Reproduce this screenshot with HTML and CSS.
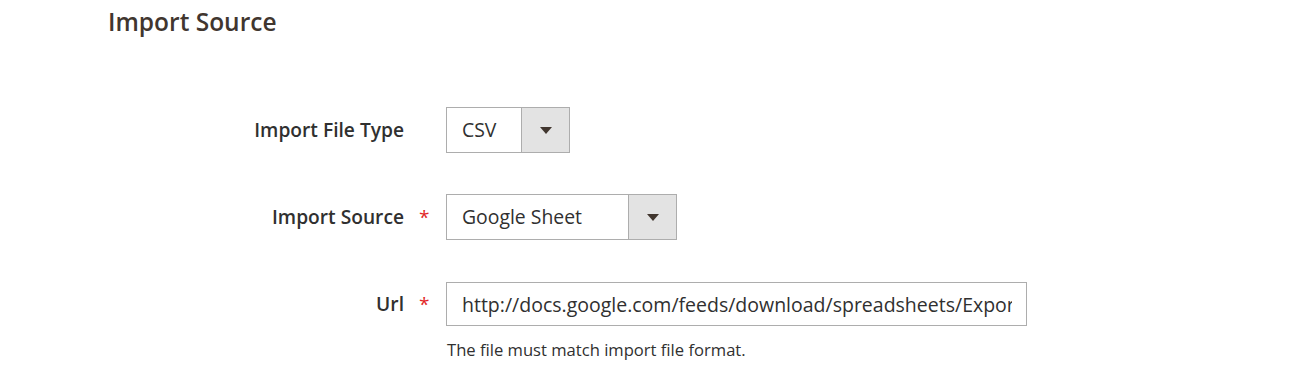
FILE: index.html
```html
<!DOCTYPE html>
<html lang="en">
<head>
    <meta charset="UTF-8">
    <meta name="viewport" content="width=device-width, initial-scale=1.0">
    <title>Import Source</title>
    <link rel="stylesheet" href="styles.css">
</head>
<body>
    <main class="page">
        <h1 class="title">Import Source</h1>
        <div class="form">
            <div class="field">
                <label class="label">Import File Type</label>
                <span class="mark"></span>
                <div class="control">
                    <div class="select select-csv">
                        <span class="select-value">CSV</span>
                        <span class="select-btn"><span class="arrow"></span></span>
                    </div>
                </div>
            </div>
            <div class="field">
                <label class="label">Import Source</label>
                <span class="mark">*</span>
                <div class="control">
                    <div class="select select-source">
                        <span class="select-value">Google Sheet</span>
                        <span class="select-btn"><span class="arrow"></span></span>
                    </div>
                </div>
            </div>
            <div class="field field-url">
                <label class="label">Url</label>
                <span class="mark">*</span>
                <div class="control">
                    <input class="input" type="text" value="http://docs.google.com/feeds/download/spreadsheets/Export?key=1&amp;exportFormat=csv">
                    <div class="note">The file must match import file format.</div>
                </div>
            </div>
        </div>
    </main>
</body>
</html>
```

FILE: styles.css
```css
body {
    margin: 0;
    background-color: #ffffff;
    font-family: "Open Sans", "Liberation Sans", sans-serif;
    color: #303030;
}

.page {
    padding-top: 6px;
}

.title {
    margin: 0 0 0 108px;
    font-size: 24.5px;
    font-weight: 600;
    line-height: 32px;
    color: #41362f;
}

.form {
    margin-top: 69px;
    display: flex;
    flex-direction: column;
    gap: 41px;
}

.field {
    display: flex;
    align-items: flex-start;
}

.field-url {
    margin-top: 1px;
}

.label {
    width: 404px;
    text-align: right;
    font-size: 19.2px;
    font-weight: 600;
    line-height: 46px;
    color: #303030;
}

.mark {
    width: 42px;
    box-sizing: border-box;
    padding-left: 15px;
    font-size: 19px;
    line-height: 46px;
    color: #e22626;
}

.field-url .label,
.field-url .mark {
    line-height: 44px;
}

.select {
    display: flex;
    height: 46px;
    box-sizing: border-box;
    border: 1px solid #adadad;
    background-color: #ffffff;
    font-size: 19.4px;
    line-height: 44px;
}

.select-csv {
    width: 124px;
}

.select-source {
    width: 231px;
}

.select-value {
    flex-grow: 1;
    padding-left: 15px;
}

.select-btn {
    width: 47px;
    border-left: 1px solid #adadad;
    background-color: #e3e3e3;
    display: flex;
    align-items: center;
    justify-content: center;
}

.arrow {
    width: 0;
    height: 0;
    border-left: 6px solid transparent;
    border-right: 6px solid transparent;
    border-top: 7px solid #41362f;
}

.input {
    display: block;
    width: 581px;
    height: 44px;
    box-sizing: border-box;
    margin: 0;
    padding: 0 14px 0 15px;
    border: 1px solid #adadad;
    font-family: inherit;
    font-size: 19.5px;
    color: #303030;
}

.note {
    margin-top: 14px;
    padding-left: 1px;
    font-size: 16.6px;
    line-height: 20px;
    color: #303030;
}
```
